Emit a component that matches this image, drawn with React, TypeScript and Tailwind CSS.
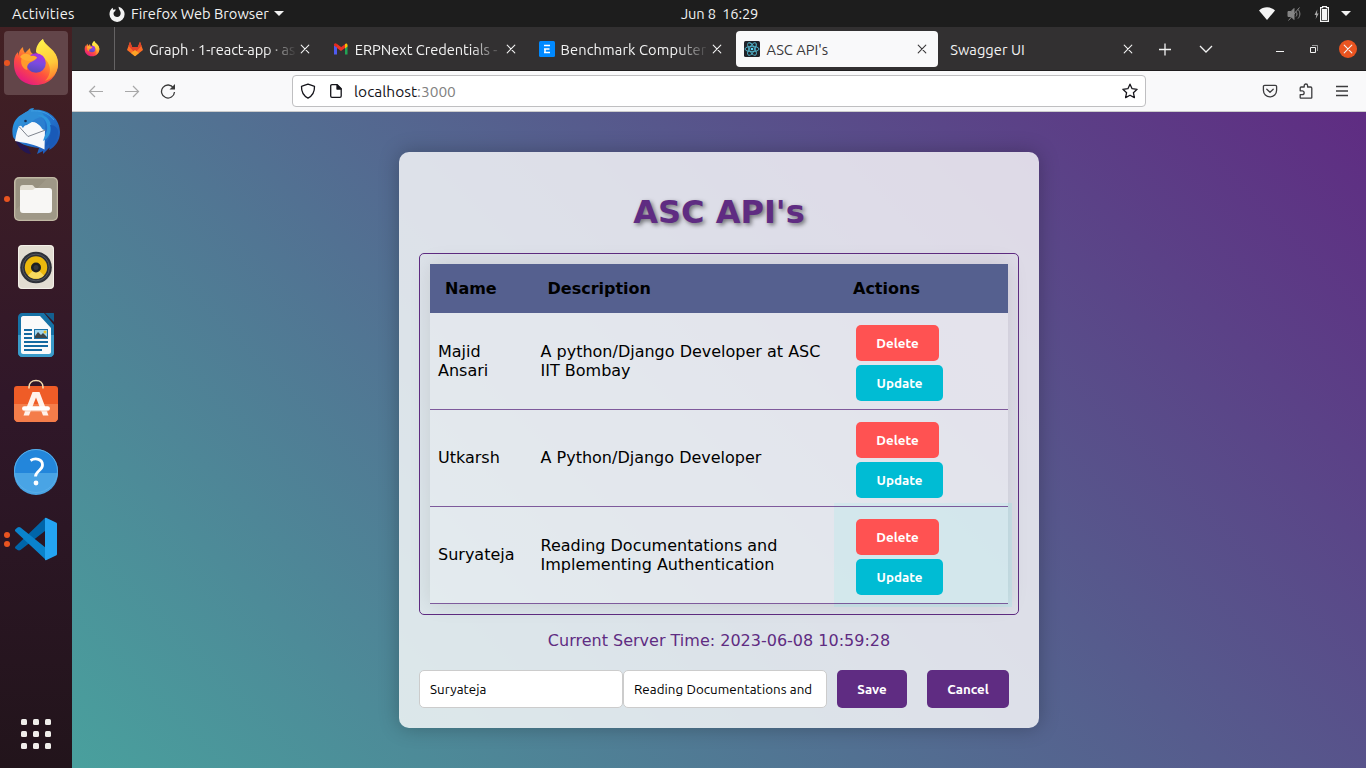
import React from "react";

const UI = "font-['Ubuntu','Noto_Sans',sans-serif]";

function Firefox({ className, id }: { className: string; id: string }) {
  return (
    <svg className={className} viewBox="-1 0 48 48">
      <defs>
        <linearGradient id={id + "a"} x1="0.85" y1="0.05" x2="0.25" y2="1">
          <stop offset="0" stopColor="#fff44f" />
          <stop offset="0.35" stopColor="#ffa42a" />
          <stop offset="0.65" stopColor="#ff4f3e" />
          <stop offset="1" stopColor="#e31587" />
        </linearGradient>
        <linearGradient id={id + "b"} x1="0.6" y1="0" x2="0.4" y2="1">
          <stop offset="0" stopColor="#b02fe0" />
          <stop offset="0.5" stopColor="#7b4be0" />
          <stop offset="1" stopColor="#5848b8" />
        </linearGradient>
        <linearGradient id={id + "c"} x1="0.4" y1="0" x2="0.6" y2="1">
          <stop offset="0" stopColor="#fff14a" />
          <stop offset="0.6" stopColor="#ffc93a" />
          <stop offset="1" stopColor="#ff7a2d" />
        </linearGradient>
      </defs>
      <path d="M10 8c0 3 1 4 2 6l5-5c0 3 1 5 3 6h6c-2-6-1-11 4-15 1 7 15 10 15 24 0 13-9.500 22-22 22S1 38 1 25c0-6 1-9 4-12v4c1-4 2-7 5-9z" fill={`url(#${id}a)`} />
      <path d="M23 13c0-6 3-10 7-13 1 8 15 11 15 25 0 9-6 15-13 17 5-5 6-11 4-16-2-7-9-8-13-13z" fill={`url(#${id}c)`} />
      <circle cx="23" cy="24" r="9.800" fill={`url(#${id}b)`} />
      <path d="M9 18c3-3 6-3 9-1 2-.5 5 0 6 1.500-1 2.500-4 3.500-6 4.500-3 1.500-4.500 4-3.500 8-5-1-8-7-5.500-13z" fill="#ff9a2a" />
      <path d="M7 18c3-4 7-4 11-1 2-.3 5 .2 6 1.500-1 1.800-3 2.500-6 3.500-4 0-8-1-11-4z" fill="#ffac33" />
    </svg>
  );
}

function Thunderbird() {
  return (
    <svg className="size-12" viewBox="0 0 48 48">
      <defs>
        <linearGradient id="tb" x1="0" y1="0" x2="1" y2="1">
          <stop offset="0" stopColor="#2da3e8" />
          <stop offset="0.5" stopColor="#2374ce" />
          <stop offset="1" stopColor="#1d4fae" />
        </linearGradient>
      </defs>
      <path d="M9 8l7-4c1-2 3-3 6-3l-1 2c14-2 27 8 27 22 0 9-5 15-11 18l1-3-7 7v-3l-6 3 2-6C17 40 4 36 1 30-1 21 2 12 9 8z" fill="url(#tb)" />
      <path d="M3 33c3 7 8 13 16 14l-3-6-13-8z" fill="#241652" />
      <path d="M7 19l5-1 9-5 12 9.500-.5 20C23 37 13 36 3 34c1-6 2-11 4-15z" fill="#f7f8fa" />
      <path d="M7 19.500l9 10L33.500 23" fill="none" stroke="#7f858f" strokeWidth="1" />
      <path d="M10 17c3-7 10-12 17-9 5 2 7 8 6 15-2 0-3-1-4-3-2-3-5-5-9-5-2 0-3 2-5 3-2 0-3 1-4 3-1-1-2-2-1-4z" fill="#2b7fd0" />
      <path d="M16 4c7-3 15 0 17 7-5-2-8 0-11 2-3 3-6 4-8 4s-3 1-3 3c-2-2-4-2-5-1-1-7 3-12 10-15z" fill="#2f8dd6" />
      <path d="M25 8c8 2 11 8 10 15-1 4-3 7-4 11 5-2 8-8 8-14 0-7-5-13-14-12z" fill="#2d95dd" />
      <path d="M38 18c2 7 0 13-4 18l-1 4 4-3v4c6-4 9-10 9-16 0-4-3-7-8-7z" fill="#195ab8" />
      <path d="M19 4c9-1 18 2 23 9" fill="none" stroke="#3f9fe2" strokeWidth="1" />
      <circle cx="13.500" cy="14" r="1.300" fill="#183056" />
    </svg>
  );
}

function Files() {
  return (
    <svg className="size-12" viewBox="0 0 48 48">
      <rect x="2" y="2" width="44" height="44" rx="5" fill="#c1b9a4" />
      <rect x="3.500" y="3.500" width="41" height="41" rx="4" fill="#989180" />
      <path d="M3.500 35L35 3.500h6c2 0 3.500 1.500 3.500 3.500v34c0 2-1.500 3.500-3.500 3.500H7c-2 0-3.500-1.500-3.500-3.500z" fill="#9f9887" />
      <path d="M8 21v-8c0-2 1-3 3-3h9c2 0 2 3 4 3h13v12H8z" fill="#e3ded2" />
      <path d="M8 15h12c2 0 2-2 4-2h13c2 0 3 1 3 3v19c0 2-1 3-3 3H11c-2 0-3-1-3-3z" fill="#f8f7f5" />
    </svg>
  );
}

function Music() {
  return (
    <svg className="size-12" viewBox="0 0 48 48">
      <rect x="6" y="2" width="36" height="44" rx="4" fill="#e2ddd2" />
      <rect x="6.500" y="2.500" width="35" height="43" rx="4" fill="none" stroke="#f3f0e9" />
      <circle cx="24" cy="24.500" r="15.800" fill="#2e3138" />
      <circle cx="24" cy="24.500" r="13.400" fill="none" stroke="#54585f" />
      <circle cx="24" cy="24.500" r="11.200" fill="#ecb90d" />
      <path d="M16 32.500a11.200 11.200 0 0 0 16 0l-8-8z" fill="#f6d95e" />
      <circle cx="24" cy="24.500" r="5" fill="#1d1f22" />
      <circle cx="24" cy="24.500" r="2.500" fill="#35373c" />
    </svg>
  );
}

function Writer() {
  return (
    <svg className="size-12" viewBox="0 0 48 48">
      <path d="M10 2h22l10 12v28c0 2-2 4-4 4H10c-2 0-4-2-4-4V6c0-2 2-4 4-4z" fill="#1672a6" />
      <path d="M6 24h36v18c0 2-2 4-4 4H10c-2 0-4-2-4-4z" fill="#3a9bc9" />
      <path d="M33 2h8c1 0 1 0 1 1v8z" fill="#135f8f" />
      <path d="M11 5h17l11 12v24c0 1-1 2-2 2H11c-1 0-2-1-2-2V7c0-1 1-2 2-2z" fill="#fafafa" />
      <path d="M12 19h8M12 23h8M12 27h8M12 31h24M12 35h24M12 39h18" stroke="#1469a0" strokeWidth="1.800" />
      <rect x="22" y="18" width="14" height="10" fill="#1972a8" />
      <rect x="23" y="19" width="12" height="8" fill="#9fd6ef" />
      <path d="M23 27v-2l3-4 3 3 2-2 4 4v1z" fill="#3c4548" />
      <circle cx="33" cy="21" r="1.500" fill="#e9bf28" />
    </svg>
  );
}

function Software() {
  return (
    <svg className="size-12" viewBox="0 0 48 48">
      <path d="M2 10c0-2 1-3 3-3h38c2 0 3 1 3 3v29c0 2-2 4-4 4H6c-2 0-4-2-4-4z" fill="#ef5c27" />
      <path d="M2 25h44v14c0 2-2 4-4 4H6c-2 0-4-2-4-4z" fill="#f47d4a" />
      <path d="M17 9.500V8c0-4 3-6.500 7-6.500S31 4 31 8v1.500" fill="none" stroke="#f5dcae" strokeWidth="1.600" />
      <path d="M20.500 13h7l9 23.500H31L24 18.500l-7 18h-5.500z" fill="#fff3ec" />
      <path d="M12.300 29.500h23.400" stroke="#fff" strokeWidth="4.500" strokeLinecap="round" />
      <path d="M12 32h24" stroke="#f7c4ab" strokeWidth="0.800" />
    </svg>
  );
}

function Help() {
  return (
    <svg className="size-12" viewBox="0 0 48 48">
      <circle cx="24" cy="24" r="22" fill="#2386db" />
      <path d="M2 26a22 22 0 0 0 44 0z" fill="#49a4e5" />
      <circle cx="24" cy="24" r="21.500" fill="none" stroke="#59aee8" />
      <path d="M18.500 13.500c5-3 12-1.500 12 4.500 0 5.500-7 6-7 11.500" fill="none" stroke="#fff" strokeWidth="2.800" />
      <circle cx="24" cy="36" r="2.400" fill="#fff" />
    </svg>
  );
}

function VSCode() {
  return (
    <svg className="size-12" viewBox="0 0 48 48">
      <path d="M3.500 31.500L33 3v13L8.500 35c-1 .7-2 .6-3 0L3.500 33.500c-.7-.6-.7-1.300 0-2z" fill="#0065a9" />
      <path d="M3.500 16.500c-.7-.7-.7-1.500 0-2.200L5.500 12.600c1-.8 2-.8 3 0L34 33v12z" fill="#0a83cc" />
      <path d="M33 3.200c0-.4.500-.6 1-.4l10 4.700c.7.300 1 .8 1 1.500v30c0 .7-.3 1.200-1 1.500l-10 4.700c-.5.200-1 0-1-.4z" fill="#24a4f2" />
    </svg>
  );
}

function DockItem({ children, dots = 0, active = false }: { children: React.ReactNode; dots?: number; active?: boolean }) {
  return (
    <div className={"relative flex size-16 items-center justify-center rounded-[4px] " + (active ? "bg-[#624549]" : "")}>
      {children}
      {dots > 0 && (
        <div className="absolute inset-y-0 left-0 flex flex-col justify-center gap-[3px]">
          {Array.from({ length: dots }, (_, i) => (
            <span key={i} className="size-[6px] rounded-full bg-[#e95420]" />
          ))}
        </div>
      )}
    </div>
  );
}

function Dock() {
  return (
    <aside className="flex w-[72px] shrink-0 flex-col justify-between bg-linear-to-b from-[#432023] via-[#301729] via-50% to-[#22141b] px-1 pt-1 pb-[19px]">
      <div className="flex flex-col gap-1">
        <DockItem dots={1} active><Firefox className="size-12" id="ffd" /></DockItem>
        <DockItem><Thunderbird /></DockItem>
        <DockItem dots={1}><Files /></DockItem>
        <DockItem><Music /></DockItem>
        <DockItem><Writer /></DockItem>
        <DockItem><Software /></DockItem>
        <DockItem><Help /></DockItem>
        <DockItem dots={2}><VSCode /></DockItem>
      </div>
      <div className="grid grid-cols-3 gap-[6px] self-center">
        {Array.from({ length: 9 }, (_, i) => (
          <span key={i} className="size-[6px] rounded-[1.5px] bg-[#f0eeeb]" />
        ))}
      </div>
    </aside>
  );
}

function TopBar() {
  return (
    <header className={UI + " flex h-[27px] items-center bg-[#1d1d1d] text-[14.667px] text-[#f2f2f2]"}>
      <span className="ml-3 w-[97px] pt-px tracking-[0.25px]">Activities</span>
      <svg className="size-4" viewBox="0 0 16 16">
        <path d="M3.500 1.800l1 2.200 2-.9-.2 1.900c-1.200.5-2 1.700-1.700 3.200.3 1.700 1.800 2.800 3.500 2.800 2.400 0 3.900-2 3.500-4.500C11.300 4.300 9.500 3.500 9.600.8c3.200.9 6 3.700 6 7.400a7.500 7.500 0 0 1-15.100.3C.4 6.200 1.200 3.600 3.500 1.800z" fill="#f2f2f2" />
      </svg>
      <span className="ml-[6px] w-[138px] pt-px whitespace-nowrap">Firefox Web Browser</span>
      <svg className="ml-[5px] h-[5px] w-[10px]" viewBox="0 0 10 5"><path d="M0 0h10L5 5z" fill="#f2f2f2" /></svg>
      <span className="ml-[397px] whitespace-pre tracking-[-0.15px]">Jun 8  16:29</span>
      <div className="ml-auto mr-[15px] flex items-center">
        <svg className="h-[13px] w-4" viewBox="0 0 16 13"><path d="M0 3.500C4.500-.8 11.500-.8 16 3.500L8 13z" fill="#f5f5f5" /></svg>
        <svg className="ml-3 h-4 w-[15px]" viewBox="0 0 15 16" fill="none" stroke="#858585">
          <path d="M1 5.500h3l3-3v11l-3-3H1z" fill="#858585" />
          <path d="M9 5.500c1.300 1.500 1.300 3.500 0 5M11 3.500c2.500 2.700 2.500 6.300 0 9M1.500 14.500l11-13" />
        </svg>
        <svg className="ml-3 h-4 w-4" viewBox="0 0 16 16">
          <path d="M3.300 3.500L.500 9h1.800l-.6 4L4.700 7.500H3z" fill="#aaa" />
          <path d="M6.600 1.600h2V.6h3.800v1h2v13.800H6.600z" fill="none" stroke="#f5f5f5" strokeWidth="1.200" />
          <rect x="8" y="3" width="5" height="11" fill="#f5f5f5" />
        </svg>
        <svg className="ml-[11px] h-[5px] w-[10px]" viewBox="0 0 10 5"><path d="M0 0h10L5 5z" fill="#f2f2f2" /></svg>
      </div>
    </header>
  );
}

function Cross({ className }: { className: string }) {
  return (
    <svg className={className} viewBox="0 0 16 16" fill="none" stroke="currentColor" strokeWidth="1.100" strokeLinecap="round">
      <path d="M4.200 4.200l7.600 7.600M11.800 4.200l-7.600 7.600" />
    </svg>
  );
}

function Tab({ icon, title, active = false, textClass }: { icon?: React.ReactNode; title: string; active?: boolean; textClass: string }) {
  return (
    <div className={"flex h-9 w-[202px] shrink-0 items-center rounded-[4px] px-2 " + (active ? "bg-[#f9f9fa] text-[#3a383a]" : "text-[#f3f3f3]")}>
      {icon && <span className="mr-[6px] size-4 shrink-0">{icon}</span>}
      <span className={"min-w-0 flex-1 overflow-hidden pt-[2px] whitespace-nowrap " + textClass}>{title}</span>
      <Cross className="size-4 shrink-0" />
    </div>
  );
}

const FADE = "[mask-image:linear-gradient(to_right,#000_calc(100%-32px),transparent)]";

function TabStrip() {
  return (
    <div className={UI + " flex h-[44px] items-center border-b border-[#1f1d1e] bg-[#323031] text-[14.667px]"}>
      <div className="flex h-full w-[43px] items-center border-r border-[#656364] pl-3">
        <Firefox className="size-4" id="fft" />
      </div>
      <div className="ml-1 flex gap-[3.800px]">
        <Tab
          title="Graph · 1-react-app · as"
          textClass={FADE + " tracking-[-0.12px]"}
          icon={
            <svg viewBox="0 0 16 16">
              <path d="M3 .8L0 9l8 6.200L16 9 13 .800 10.800 6H5.200z" fill="#fc6d26" />
              <path d="M3 .8L5.200 6h5.600L13 .8l1.500 4L8 12 1.500 4.800z" fill="#e24329" />
              <path d="M4 12l4-3 4 3-4 3.200z" fill="#fca326" />
            </svg>
          }
        />
        <Tab
          title="ERPNext Credentials -"
          textClass={FADE + " tracking-[-0.04px]"}
          icon={
            <svg viewBox="0 0 16 16">
              <path d="M1 4v9.500h3V6z" fill="#4f5bf0" />
              <path d="M12 6v7.500h2.500V4z" fill="#22a454" />
              <path d="M1 4.500V3c1-1 2-.8 3 0l4 3v3.500z" fill="#e62a1c" />
              <path d="M4 3.500L8 6.300l4-3V7L8 10 4 7z" fill="#ea3325" />
              <path d="M12 3c1-1 2.500-.6 2.500 1v1.500L12 7.500z" fill="#fbbc04" />
            </svg>
          }
        />
        <Tab
          title="Benchmark Computer"
          textClass={FADE + " tracking-[0.1px]"}
          icon={
            <svg viewBox="0 0 16 16">
              <rect width="16" height="16" rx="1.500" fill="#0089ff" />
              <path d="M5 4.500h6M5 8h5.500M5 11.500h6M6 7.500v4" stroke="#fff" strokeWidth="1.500" />
            </svg>
          }
        />
        <Tab
          title="ASC API's"
          active
          textClass=""
          icon={
            <svg viewBox="0 0 16 16">
              <rect width="16" height="16" rx="1.500" fill="#20232a" />
              <g fill="none" stroke="#53b9d1" strokeWidth="0.900">
                <ellipse cx="8" cy="8" rx="7" ry="2.700" />
                <ellipse cx="8" cy="8" rx="7" ry="2.700" transform="rotate(60 8 8)" />
                <ellipse cx="8" cy="8" rx="7" ry="2.700" transform="rotate(120 8 8)" />
              </g>
              <circle cx="8" cy="8" r="1.300" fill="#61dafb" />
            </svg>
          }
        />
        <Tab title="Swagger UI" textClass="tracking-[0.05px]" />
      </div>
      <div className="ml-auto mr-[9px] flex items-center text-[#f3f3f3]">
        <svg className="size-4" viewBox="0 0 16 16" stroke="currentColor" strokeWidth="1.300"><path d="M2 8.500h12M8 2.500v12" /></svg>
        <svg className="ml-[25px] size-4" viewBox="0 0 16 16" fill="none" stroke="currentColor" strokeWidth="1.300"><path d="M2 5l6 6 6-6" /></svg>
        <svg className="ml-[58px] size-4" viewBox="0 0 16 16" stroke="currentColor"><path d="M4 10.500h8" /></svg>
        <svg className="ml-[18px] size-4" viewBox="0 0 16 16" fill="none" stroke="currentColor">
          <path d="M4.500 6.500h5v5h-5z" /><path d="M6 4.500h5.500V10" opacity=".55" />
        </svg>
        <span className="ml-[17px] flex size-[18px] items-center justify-center rounded-full bg-[#e95420]">
          <Cross className="size-4" />
        </span>
      </div>
    </div>
  );
}

function Toolbar() {
  return (
    <div className={UI + " flex h-[41px] items-center border-b border-[#cccccc] bg-[#f9f9fa] text-[15.500px]"}>
      <svg className="ml-4 size-4 text-[#a8a8a8]" viewBox="0 0 16 16" fill="none" stroke="currentColor" strokeWidth="1.200"><path d="M15 8.500H1.500M7 3L1.500 8.500 7 14" /></svg>
      <svg className="ml-5 size-4 text-[#a8a8a8]" viewBox="0 0 16 16" fill="none" stroke="currentColor" strokeWidth="1.200"><path d="M1 8.500h13.500M9 3l5.500 5.500L9 14" /></svg>
      <svg className="ml-5 size-4 text-[#3a3a3a]" viewBox="0 0 16 16" fill="none" stroke="currentColor" strokeWidth="1.300">
        <path d="M13.500 5A6.500 6.500 0 1 0 14.500 9" />
        <path d="M15 1v5.500H9.500z" fill="currentColor" stroke="none" />
      </svg>
      <div className="ml-[116px] flex h-8 w-[854px] items-center rounded-[4px] border border-[#bfbfc1] bg-white px-[7px] text-[#15141a]">
        <svg className="size-4" viewBox="0 0 16 16" fill="none" stroke="currentColor" strokeWidth="1.300" strokeLinejoin="round">
          <path d="M8 1.200c2 .8 4.200 1.500 6.500 2.100.2 5.700-1.700 9.400-6.500 11.800C3.200 12.700 1.300 9 1.500 3.300 3.800 2.700 6 2 8 1.200z" />
        </svg>
        <svg className="ml-3 size-4" viewBox="0 0 16 16" fill="none" stroke="currentColor" strokeWidth="1.300" strokeLinejoin="round">
          <path d="M4 1.700h5.200l4 4V13c0 .8-.5 1.300-1.300 1.300H4c-.8 0-1.300-.5-1.300-1.300V3c0-.800.500-1.300 1.300-1.300z" />
          <path d="M9 2v4h4z" fill="currentColor" />
        </svg>
        <span className="ml-[10px] pt-px">localhost<span className="text-[#818181]">:3000</span></span>
        <svg className="ml-auto size-4" viewBox="0 0 16 16" fill="none" stroke="currentColor" strokeWidth="1.300" strokeLinejoin="round">
          <path d="M8 1.200l2.100 4.500 5 .6-3.700 3.400 1 4.900L8 12.200l-4.400 2.400 1-4.900L.9 6.300l5-.6z" />
        </svg>
      </div>
      <div className="ml-auto mr-4 flex items-center gap-[20px] text-[#3c3c3e]">
        <svg className="size-4" viewBox="0 0 16 16" fill="none" stroke="currentColor" strokeWidth="1.300" strokeLinecap="round" strokeLinejoin="round">
          <path d="M2.700 2.300h10.600c.8 0 1.300.5 1.300 1.300v3.700a6.600 6.600 0 0 1-13.200 0V3.600c0-.8.5-1.300 1.300-1.300z" /><path d="M4.800 6.300L8 9.300l3.200-3" />
        </svg>
        <svg className="size-4" viewBox="0 0 16 16" fill="none" stroke="currentColor" strokeWidth="1.300" strokeLinejoin="round">
          <path d="M2.200 7V5c0-.6.400-1 1-1h3V2.700a1.700 1.700 0 0 1 3.400 0V4h3c.7 0 1.200.5 1.200 1.200v9.300c0 .4-.3.700-.7.700H3c-.5 0-.8-.3-.8-.8v-2.700h2a1.700 1.700 0 0 0 0-3.900H2.200z" />
        </svg>
        <svg className="size-4" viewBox="0 0 16 16" fill="none" stroke="currentColor" strokeWidth="1.300"><path d="M2 3.500h12M2 8h12M2 12.500h12" /></svg>
      </div>
    </div>
  );
}

const rows = [
  { name: "Majid Ansari", description: "A python/Django Developer at ASC IIT Bombay" },
  { name: "Utkarsh", description: "A Python/Django Developer" },
  { name: "Suryateja", description: "Reading Documentations and Implementing Authentication", hovered: true },
];

const CELL = "border-b border-[#5f2c82]/75 bg-white/20 bg-clip-padding px-2 leading-[19px]";

function Page() {
  return (
    <main className="flex flex-1 items-start justify-center bg-[linear-gradient(45deg,#49a09d,#5f2c82)] pt-10 font-['DejaVu_Sans',sans-serif] text-[16px] text-black">
      <section className="flex h-[576px] w-[640px] flex-col rounded-[10px] bg-white/80 px-5 shadow-[0_0_20px_rgba(0,0,0,0.25)]">
        <h1 className="mt-[41px] text-center text-[32px] leading-[38px] font-bold text-[#5f2c82] [text-shadow:2px_2px_4px_rgba(0,0,0,0.5)]">ASC API's</h1>
        <div className="mt-[22px] rounded-[5px] border border-[#5f2c82] p-[10px]">
          <table className="isolate w-[578px] table-fixed border-separate border-spacing-0 text-left shadow-[0_0_20px_rgba(0,0,0,0.1)]">
            <colgroup>
              <col className="w-[102.5px]" />
              <col className="w-[305.500px]" />
              <col className="w-[170px]" />
            </colgroup>
            <thead>
              <tr className="h-[49px] bg-[#55608f]">
                <th className="px-[15px]">Name</th>
                <th className="px-[15px]">Description</th>
                <th className="px-[15px]">Actions</th>
              </tr>
            </thead>
            <tbody>
              {rows.map((r) => (
                <tr key={r.name} className="h-[97px]">
                  <td className={CELL + " pb-px"}>{r.name}</td>
                  <td className={CELL + " pb-px"}>{r.description}</td>
                  <td className={CELL + " relative"}>
                    {r.hovered && <span className="absolute -top-1 -right-1 -bottom-[4px] -left-1 -z-10 bg-[#68f0e8]/17" />}
                    <div className={UI + " relative ml-[10px] flex flex-col items-start gap-1 pt-1 text-[13.333px] font-bold text-white"}>
                      <button className="h-9 w-[83px] rounded-[5px] bg-[#ff5252]">Delete</button>
                      <button className="h-9 w-[87px] rounded-[5px] bg-[#00bcd4]">Update</button>
                    </div>
                  </td>
                </tr>
              ))}
            </tbody>
          </table>
        </div>
        <p className="mt-4 text-center leading-[19px] text-[#5f2c82]">Current Server Time: 2023-06-08 10:59:28</p>
        <div className={UI + " mt-5 flex text-[13.333px]"}>
          <input className="h-[38px] w-[204px] rounded-[5px] border border-[#cccccc] bg-white px-[10px] tracking-[0.07px]" defaultValue="Suryateja" />
          <input className="h-[38px] w-[204px] rounded-[5px] border border-[#cccccc] bg-white px-[10px] tracking-[0.07px]" defaultValue="Reading Documentations and" />
          <button className="ml-[10px] h-[38px] w-[70px] rounded-[5px] bg-[#5f2c82] pt-px font-bold text-white">Save</button>
          <button className="ml-5 h-[38px] w-[82px] rounded-[5px] bg-[#5f2c82] pt-px font-bold text-white">Cancel</button>
        </div>
      </section>
    </main>
  );
}

export default function App() {
  return (
    <div className="flex h-[768px] w-[1366px] flex-col overflow-hidden">
      <TopBar />
      <div className="flex min-h-0 flex-1">
        <Dock />
        <div className="flex min-w-0 flex-1 flex-col">
          <TabStrip />
          <Toolbar />
          <Page />
        </div>
      </div>
    </div>
  );
}
